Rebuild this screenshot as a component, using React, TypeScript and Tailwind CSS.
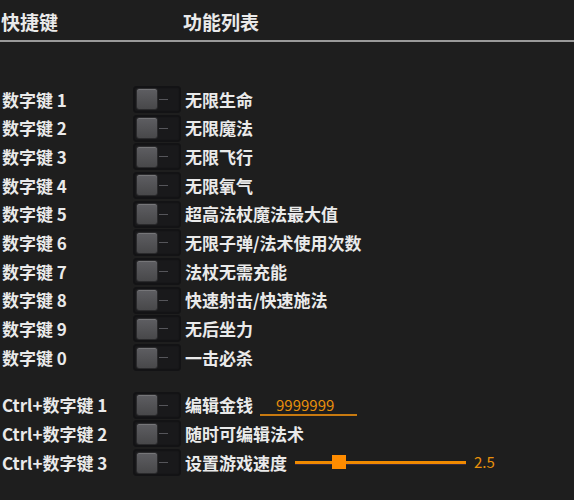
import React from "react";

const rows1 = [
  ["数字键 1", "无限生命"],
  ["数字键 2", "无限魔法"],
  ["数字键 3", "无限飞行"],
  ["数字键 4", "无限氧气"],
  ["数字键 5", "超高法杖魔法最大值"],
  ["数字键 6", "无限子弹/法术使用次数"],
  ["数字键 7", "法杖无需充能"],
  ["数字键 8", "快速射击/快速施法"],
  ["数字键 9", "无后坐力"],
  ["数字键 0", "一击必杀"],
];

function Toggle() {
  return (
    <div className="w-[48px] h-[27px] rounded-[3px] bg-[#19191b] border border-[#131315] shadow-[inset_0_0_2px_rgba(0,0,0,0.8)] flex items-center pl-[2px]">
      <div className="w-[22px] h-[22px] rounded-[3px] bg-gradient-to-b from-[#5e5e62] to-[#48484a] border border-[#2a2a2c] shadow-[inset_0_1px_0_rgba(255,255,255,0.15)]" />
      <div className="w-[9px] h-px bg-[#55555a] ml-[1px]" />
    </div>
  );
}

function Row({ k, f, extra }: { k: string; f: string; extra?: React.ReactNode }) {
  return (
    <div className="flex items-center h-[28.7px]">
      <div className="w-[133px] pl-[2px] text-[17px] font-bold text-[#eaeaea] whitespace-nowrap">{k}</div>
      <Toggle />
      <div className="ml-[4px] text-[17px] font-bold text-[#eaeaea] whitespace-nowrap">{f}</div>
      {extra}
    </div>
  );
}

export default function App() {
  return (
    <div
      className="w-[574px] h-[500px] bg-[#1e1e1e] overflow-hidden"
      style={{ fontFamily: '"Noto Sans CJK SC", "Noto Sans", sans-serif' }}
    >
      <div className="flex items-center h-[42px] border-b-2 border-[#9a9a9a] text-[19px] font-bold text-[#eaeaea] pt-[4px]">
        <div className="w-[183px] pl-[1px]">快捷键</div>
        <div>功能列表</div>
      </div>
      <div className="pt-[43px]">
        {rows1.map(([k, f]) => (
          <Row key={k} k={k} f={f} />
        ))}
      </div>
      <div className="pt-[19px]">
        <Row
          k="Ctrl+数字键 1"
          f="编辑金钱"
          extra={
            <div className="ml-[7px] w-[97px] border-b-2 border-[#c87a10] text-[#e8900c] text-[15px] pl-[16px] leading-[18px] mt-[2px]">
              9999999
            </div>
          }
        />
        <Row k="Ctrl+数字键 2" f="随时可编辑法术" />
        <Row
          k="Ctrl+数字键 3"
          f="设置游戏速度"
          extra={
            <div className="flex items-center ml-[8px]">
              <div className="relative w-[171px] h-[4px] bg-[#f08a00] border-b border-[#3a2a40]">
                <div className="absolute left-[37px] top-[-6px] w-[14px] h-[14px] bg-[#ff8c00]" />
              </div>
              <div className="ml-[8px] text-[15px] text-[#e8900c]">2.5</div>
            </div>
          }
        />
      </div>
    </div>
  );
}
